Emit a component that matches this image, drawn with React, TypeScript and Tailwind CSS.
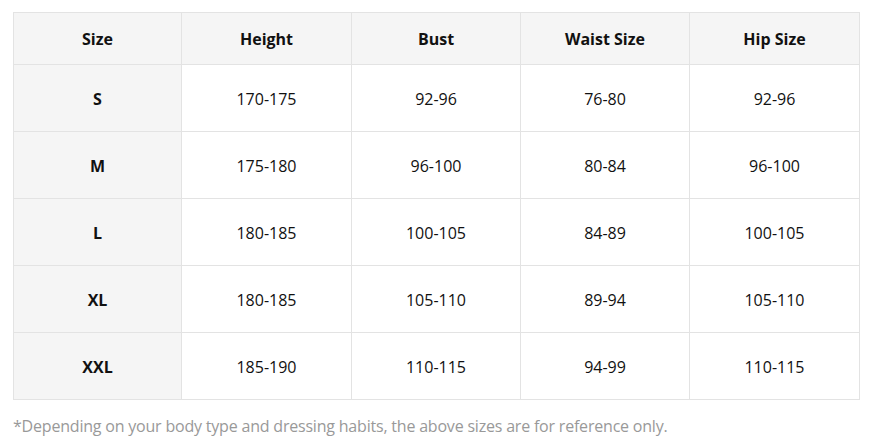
import React from "react";

const headers = ["Size", "Height", "Bust", "Waist Size", "Hip Size"];
const rows = [
  ["S", "170-175", "92-96", "76-80", "92-96"],
  ["M", "175-180", "96-100", "80-84", "96-100"],
  ["L", "180-185", "100-105", "84-89", "100-105"],
  ["XL", "180-185", "105-110", "89-94", "105-110"],
  ["XXL", "185-190", "110-115", "94-99", "110-115"],
];

export default function App() {
  return (
    <div
      className="w-[872px] h-[446px] bg-white pl-[13px] pt-[12px]"
      style={{ fontFamily: '"Open Sans", "Noto Sans", sans-serif' }}
    >
      <div className="w-[847px] grid grid-cols-[168px_170px_169px_169px_170px] border-l border-t border-[#e3e3e3] text-[16px] text-[#111]">
        {headers.map((h) => (
          <div
            key={h}
            className="h-[52px] pt-[1px] flex items-center justify-center bg-[#f5f5f5] border-r border-b border-[#e3e3e3] font-bold"
          >
            {h}
          </div>
        ))}
        {rows.map((r) =>
          r.map((c, i) => (
            <div
              key={r[0] + i}
              className={
                i === 0
                  ? "h-[67px] pt-[1px] flex items-center justify-center bg-[#f5f5f5] border-r border-b border-[#e3e3e3] font-bold"
                  : "h-[67px] pt-[1px] flex items-center justify-center bg-white border-r border-b border-[#e3e3e3]"
              }
            >
              {c}
            </div>
          ))
        )}
      </div>
      <p className="mt-[15px] text-[16px] tracking-[-0.2px] text-[#999] leading-[22px]">
        *Depending on your body type and dressing habits, the above sizes are for reference only.
      </p>
    </div>
  );
}
